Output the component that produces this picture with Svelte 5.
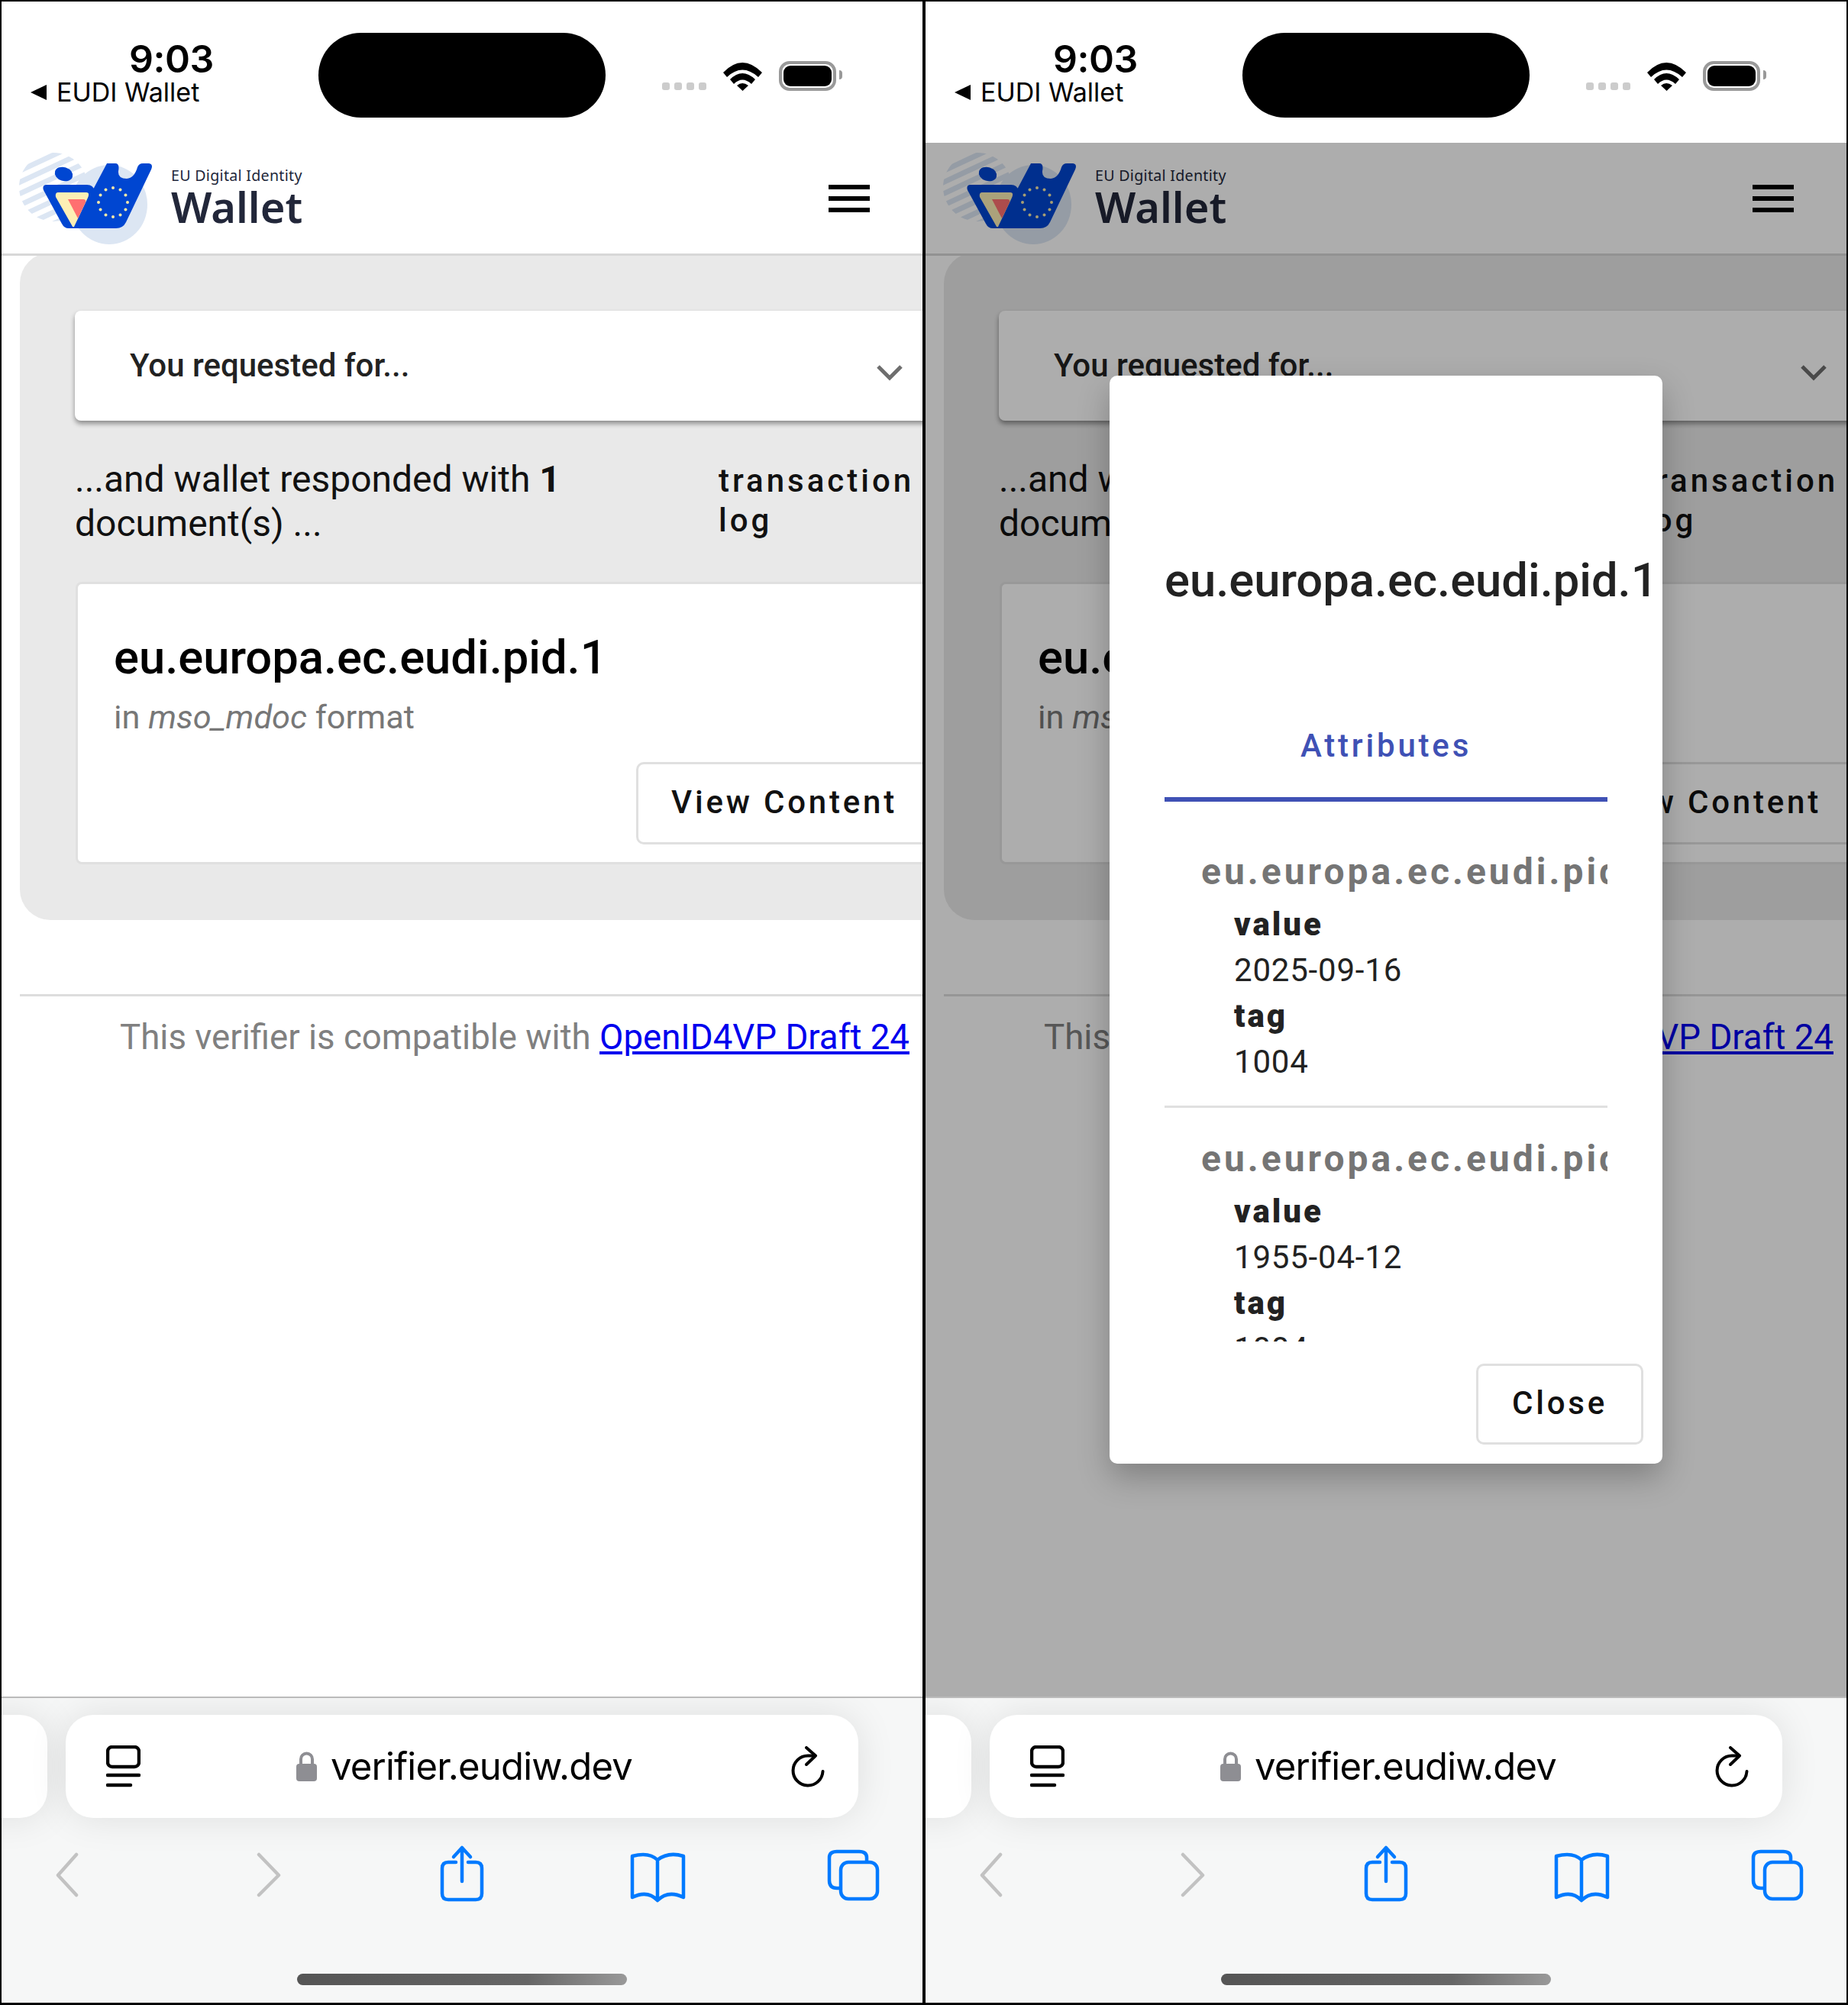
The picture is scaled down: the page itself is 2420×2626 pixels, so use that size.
<script lang="ts">
    const pages = [{ modal: false }, { modal: true }];
    const attributes = [
        { date: "2025-09-16", tag: "1004" },
        { date: "1955-04-12", tag: "1004" }
    ];
    const stars = Array.from({ length: 12 }, (_, i) => {
        const a = (i * Math.PI) / 6;
        return { x: 148 + 19 * Math.cos(a), y: 265 + 19 * Math.sin(a) };
    });
    const stripes = [0, 1, 2, 3, 4, 5, 6, 7];
</script>

{#snippet logo()}
    <svg class="logo" viewBox="20 195 185 130" width="185" height="130">
        <defs>
            <clipPath id="stripe-disc"><circle cx="70" cy="245" r="45" /></clipPath>
        </defs>
        <g clip-path="url(#stripe-disc)" stroke="#dce6f3" stroke-width="7">
            {#each stripes as s}
                <line x1="10" y1={216 + s * 15} x2="130" y2={160 + s * 15} />
            {/each}
        </g>
        <ellipse cx="143" cy="268" rx="50" ry="52" fill="#dce6f3" />
        <ellipse cx="83.500" cy="228" rx="12" ry="9" transform="rotate(18 83.500 228)" fill="#0046d1" />
        <path d="M60 242 H114 Q122 242 124 250 L96 299 H90 Q84 299 81 293 L57 249 Q55 243 60 242 Z" fill="#0046d1" />
        <path d="M140 214 H151 Q157 214 155 224 Q154 234 166 234 Q176 233 180 219 Q182 214 187 214 H195 Q201 215 198 222 L165 291 Q161 299 152 299 H90 L122 248 Z" fill="#0046d1" />
        <path d="M76 252 H113 Q118 252 115 259 L97 297 Q95 298 94 295 L73 258 Q72 252 76 252 Z" fill="#fdefb5" />
        <path d="M89 261 H109 Q113 261 112 265 L102 286 Z" fill="#ff7070" />
        {#each stars as s}
            <circle cx={s.x} cy={s.y} r="2" fill="#f6e9a8" />
        {/each}
    </svg>
{/snippet}

{#snippet statusBar()}
    <div class="status">
        <div class="status-left">
            <div class="time">9:03</div>
            <div class="back-app"><span class="back-tri"></span>EUDI Wallet</div>
        </div>
        <div class="island"></div>
        <div class="status-right">
            <div class="dots"><i></i><i></i><i></i><i></i></div>
            <svg class="wifi" viewBox="0 0 51 37" width="51" height="37">
                <path d="M0 13 Q25 -13 51 13 L46 19 Q25 0 5 19 Z M9 22 Q25 6 42 22 L37 28 Q25 17 14 28 Z M18 30 Q25 24 33 30 L25.500 37 Z" fill="#000" />
            </svg>
            <div class="battery"><div class="charge"></div><div class="nub"></div></div>
        </div>
    </div>
{/snippet}

{#snippet browserBar()}
    <div class="browser">
        <div class="url-row">
            <div class="prev-tab"></div>
            <div class="url-field">
                <svg class="tabs-ico" viewBox="0 0 45 56" width="45" height="56" fill="none" stroke="#000" stroke-width="4.500" stroke-linecap="round">
                    <rect x="2" y="2" width="41" height="26" rx="6" />
                    <path d="M2 39 H43 M2 52 H32" />
                </svg>
                <div class="url">
                    <svg viewBox="0 0 27 39" width="27" height="39">
                        <path d="M6 17 V10 A7.500 7.500 0 0 1 21 10 V17" fill="none" stroke="#8e8e93" stroke-width="4" />
                        <rect x="0" y="16" width="27" height="23" rx="4" fill="#8e8e93" />
                    </svg>
                    <span>verifier.eudiw.dev</span>
                </div>
                <svg class="reload" viewBox="0 0 44 54" width="44" height="54" fill="none" stroke="#000" stroke-width="4" stroke-linecap="round" stroke-linejoin="round">
                    <path d="M41.500 33 A19.500 19.500 0 1 1 22 12.500 H31" />
                    <path d="M20 2 L32 12.500 L20 24" />
                </svg>
            </div>
        </div>
        <div class="toolbar">
            <svg class="tool" viewBox="2 0 1206 80" width="1206" height="80" fill="none" stroke-width="4.500" stroke-linecap="round" stroke-linejoin="round">
                <path d="M100 14 L76 41 L100 67 M339 14 L365 41 L339 67" stroke="#c2c2c2" />
                <g stroke="#007aff">
                    <path d="M597 24 H587 Q579 24 579 32 V65 Q579 73 587 73 H623 Q631 73 631 65 V32 Q631 24 623 24 H613" />
                    <path d="M605 49 V5 M594 17 L605 5 L616 17" />
                    <path d="M861 21 Q850 10 828 16 V70 Q848 60 861 74 Q875 60 895 70 V16 Q875 10 861 21 V74" />
                    <path d="M1100 58 H1096 Q1086 58 1086 48 V18 Q1086 10 1096 10 H1125 Q1135 10 1135 18 V22" />
                    <rect x="1101" y="24" width="48" height="48" rx="10" />
                </g>
            </svg>
        </div>
        <div class="home"></div>
    </div>
{/snippet}

{#snippet phone(showModal)}
    <div class="phone">
        {@render statusBar()}
        <div class="viewport">
            <main class="main">
                <section class="panel">
                    <div class="accordion">
                        <span>You requested for...</span>
                        <svg viewBox="0 0 34 22" width="34" height="22" fill="none" stroke="#6e6e6e" stroke-width="5">
                            <path d="M2 3 L17 18 L32 3" />
                        </svg>
                    </div>
                    <div class="summary">
                        <p>...and wallet responded with <b>1</b> document(s) ...</p>
                        <div class="log-btn">transaction log</div>
                    </div>
                    <div class="card">
                        <h2>eu.europa.ec.eudi.pid.1</h2>
                        <div class="format">in <em>mso_mdoc</em> format</div>
                        <div class="card-actions"><div class="btn">View Content</div></div>
                    </div>
                </section>
                <hr />
                <footer class="compat">This verifier is compatible with <a href="#top">OpenID4VP Draft 24</a></footer>
            </main>
            <header class="app-header">
                <div class="brand">
                    {@render logo()}
                    <div class="brand-text">
                        <div class="brand-small">EU Digital Identity</div>
                        <div class="brand-big">Wallet</div>
                    </div>
                </div>
                <div class="burger"><i></i><i></i><i></i></div>
            </header>
            {#if showModal}
                <div class="backdrop">
                    <div class="dialog">
                        <h3>eu.europa.ec.eudi.pid.1</h3>
                        <div class="tab">Attributes</div>
                        <div class="attr-list">
                            {#each attributes as attr, i}
                                <div class="attr" class:sep={i === 0}>
                                    <div class="attr-name">eu.europa.ec.eudi.pid.1:issuance_date</div>
                                    <dl>
                                        <dt>value</dt>
                                        <dd>{attr.date}</dd>
                                        <dt>tag</dt>
                                        <dd>{attr.tag}</dd>
                                    </dl>
                                </div>
                            {/each}
                        </div>
                        <div class="dialog-actions"><div class="btn close">Close</div></div>
                    </div>
                </div>
            {/if}
        </div>
        {@render browserBar()}
    </div>
{/snippet}

<div class="screens">
    {#each pages as page}
        {@render phone(page.modal)}
    {/each}
</div>

<style>
    :global(body) {
        margin: 0;
        background: #000;
    }

    .screens {
        display: flex;
        width: 2420px;
        height: 2626px;
        background: #000;
        padding: 2px 0 3px 2px;
        gap: 4px;
        box-sizing: border-box;
        font-family: Roboto, sans-serif;
    }

    .phone {
        width: 1206px;
        height: 2621px;
        display: flex;
        flex-direction: column;
        background: #fff;
        overflow: hidden;
    }

    .status {
        height: 185px;
        flex: none;
        display: flex;
        font-family: Inter, "Liberation Sans", sans-serif;
        color: #000;
        padding: 41px 0 0 38px;
        box-sizing: border-box;
    }

    .status-left {
        width: 377px;
        flex: none;
    }

    .time {
        font-size: 50px;
        font-weight: 600;
        line-height: 60px;
        padding: 4px 0 0 129px;
        letter-spacing: -0.5px;
    }

    .back-app {
        font-size: 34px;
        line-height: 38px;
        margin-top: -5px;
        display: flex;
        align-items: center;
        gap: 13px;
    }

    .back-tri {
        width: 0;
        height: 0;
        border-style: solid;
        border-width: 10px 21px 10px 0;
        border-color: transparent #000 transparent transparent;
    }

    .island {
        width: 376px;
        height: 111px;
        border-radius: 56px;
        background: #000;
        flex: none;
    }

    .status-right {
        display: flex;
        align-items: flex-end;
        height: 76px;
        padding-left: 74px;
    }

    .dots {
        display: flex;
        gap: 6px;
        margin-bottom: 1px;
    }

    .dots i {
        width: 10px;
        height: 10px;
        border-radius: 3px;
        background: #ccc;
    }

    .wifi {
        margin-left: 22px;
    }

    .battery {
        position: relative;
        width: 75px;
        height: 39px;
        margin-left: 22px;
        border: 4px solid #999;
        border-radius: 14px;
        box-sizing: border-box;
        padding: 2px;
    }

    .charge {
        height: 100%;
        background: #000;
        border-radius: 9px;
    }

    .nub {
        position: absolute;
        right: -12px;
        top: 8px;
        width: 4px;
        height: 12px;
        border-radius: 0 4px 4px 0;
        background: #999;
    }

    .viewport {
        position: relative;
        flex: 1;
        min-height: 0;
        overflow: hidden;
        background: #fff;
        display: flex;
        flex-direction: column-reverse;
        justify-content: flex-end;
    }

    .app-header {
        height: 148px;
        flex: none;
        box-sizing: border-box;
        border-bottom: 3px solid #d8d8d8;
        display: flex;
        align-items: center;
        justify-content: space-between;
        padding-right: 69px;
        background: #fff;
        position: relative;
    }

    .brand {
        display: flex;
        align-items: flex-start;
        height: 146px;
        padding-left: 18px;
    }

    .logo {
        margin-top: 8px;
        flex: none;
    }

    .brand-text {
        color: #22273a;
        font-family: "Noto Sans", sans-serif;
        margin-left: 19px;
        padding-top: 31px;
    }

    .brand-small {
        font-size: 19.6px;
        line-height: 24px;
        letter-spacing: 0.3px;
    }

    .brand-big {
        font-size: 56px;
        line-height: 56px;
        font-weight: 600;
    }

    .burger {
        display: flex;
        flex-direction: column;
        gap: 9px;
    }

    .burger i {
        width: 54px;
        height: 6px;
        background: #000;
    }

    .main {
        padding: 0 0 0 24px;
        margin-top: -4px;
    }

    .panel {
        width: 1400px;
        background: #e9e9e9;
        border-radius: 40px;
        padding: 76px 72px 0;
        box-sizing: border-box;
        height: 874px;
    }

    .accordion {
        height: 144px;
        width: 1256px;
        background: #fff;
        border-radius: 8px;
        box-shadow: 0 4px 6px rgba(0, 0, 0, 0.4);
        display: flex;
        align-items: center;
        box-sizing: border-box;
        padding-left: 72px;
        font-size: 42px;
        font-weight: 500;
        color: #222;
    }

    .accordion span {
        width: 978px;
        flex: none;
        padding-bottom: 2px;
    }

    .accordion svg {
        margin-top: 18px;
    }

    .summary {
        display: flex;
        width: 1103px;
        justify-content: space-between;
        margin-top: 48px;
        color: #111;
    }

    .summary p {
        margin: 0;
        width: 680px;
        font-size: 48px;
        line-height: 58px;
    }

    .log-btn {
        width: 260px;
        font-size: 42px;
        font-weight: 500;
        line-height: 52px;
        letter-spacing: 4px;
        margin-top: 5px;
    }

    .card {
        width: 1256px;
        height: 370px;
        margin: 47px 0 0 1px;
        background: #fff;
        border: 3px solid #e0e0e0;
        border-radius: 8px;
        box-sizing: border-box;
        padding: 61px 47px 0;
    }

    h2, h3 {
        margin: 0;
        font-size: 61.5px;
        line-height: 70px;
        font-weight: 500;
    }

    h2 {
        color: #000;
    }

    .format {
        font-size: 43.3px;
        line-height: 50px;
        margin-top: 19px;
        color: #777;
    }

    .card-actions {
        margin: 33px 0 0 684px;
    }

    .btn {
        width: 400px;
        height: 108px;
        box-sizing: border-box;
        border: 3px solid #e0e0e0;
        border-radius: 10px;
        font-size: 42px;
        font-weight: 500;
        letter-spacing: 3.8px;
        color: #111;
        display: flex;
        align-items: center;
        padding: 0 0 3px 43px;
        background: #fff;
    }

    hr {
        margin: 97px 0 0;
        border: 0;
        border-top: 3px solid #ddd;
    }

    .compat {
        margin-top: 26px;
        width: 1165px;
        text-align: right;
        font-size: 45.6px;
        line-height: 56px;
        color: #808080;
    }

    .compat a {
        color: #0000ee;
    }

    .backdrop {
        position: absolute;
        inset: 0;
        background: rgba(0, 0, 0, 0.32);
    }

    .dialog {
        position: absolute;
        left: 241px;
        top: 305px;
        width: 724px;
        height: 1425px;
        background: #fff;
        border-radius: 10px;
        box-shadow: 0 18px 40px rgba(0, 0, 0, 0.25);
        box-sizing: border-box;
        padding: 0 72px;
        overflow: hidden;
    }

    h3 {
        color: #222;
        padding-top: 233px;
        white-space: nowrap;
    }

    .tab {
        width: 580px;
        height: 104px;
        margin-top: 151px;
        border-bottom: 6px solid #3f51b5;
        box-sizing: border-box;
        color: #3f51b5;
        text-align: center;
        font-size: 42px;
        font-weight: 500;
        letter-spacing: 3.8px;
        line-height: 62px;
    }

    .attr-list {
        width: 580px;
        height: 707px;
        overflow: hidden;
    }

    .attr {
        padding: 39px 0 0 48px;
    }

    .attr.sep {
        height: 401px;
        box-sizing: border-box;
        padding-top: 64px;
        border-bottom: 3px solid #e0e0e0;
    }

    .attr-name {
        font-size: 48px;
        font-weight: 700;
        letter-spacing: 4px;
        color: #757575;
        white-space: nowrap;
        line-height: 56px;
    }

    dl {
        margin: 11px 0 0 43px;
        font-size: 42px;
        line-height: 60px;
        color: #222;
    }

    dt {
        font-weight: 900;
        letter-spacing: 3px;
    }

    dd {
        margin: 0;
        letter-spacing: 0.8px;
    }

    .dialog-actions {
        display: flex;
        justify-content: flex-end;
        margin: 29px -47px 0 0;
    }

    .close {
        width: 219px;
        height: 106px;
        justify-content: center;
        padding: 0 0 3px;
    }

    .browser {
        height: 401px;
        flex: none;
        background: #f6f7f7;
        border-top: 2px solid #bbb;
        box-sizing: border-box;
        overflow: hidden;
    }

    .url-row {
        display: flex;
        gap: 24px;
        margin-top: 22px;
        margin-left: -40px;
    }

    .prev-tab, .url-field {
        height: 135px;
        background: #fff;
        border-radius: 36px;
        box-shadow: 0 0 50px rgba(0, 0, 0, 0.1);
        flex: none;
    }

    .prev-tab {
        width: 100px;
    }

    .url-field {
        width: 1038px;
        display: flex;
        align-items: center;
        box-sizing: border-box;
        padding: 0 44px 0 53px;
        justify-content: space-between;
    }

    .url {
        display: flex;
        align-items: center;
        gap: 18px;
        margin-right: 4px;
        font-family: Inter, "Liberation Sans", sans-serif;
        font-size: 49px;
        letter-spacing: -0.8px;
        color: #000;
    }

    .toolbar {
        height: 80px;
        margin-top: 34px;
    }

    .tool {
        display: block;
    }

    .home {
        width: 432px;
        height: 15px;
        margin: 90px 0 0 387px;
        border-radius: 8px;
        background: linear-gradient(90deg, #555 0%, #666 70%, #999 100%);
    }
</style>
